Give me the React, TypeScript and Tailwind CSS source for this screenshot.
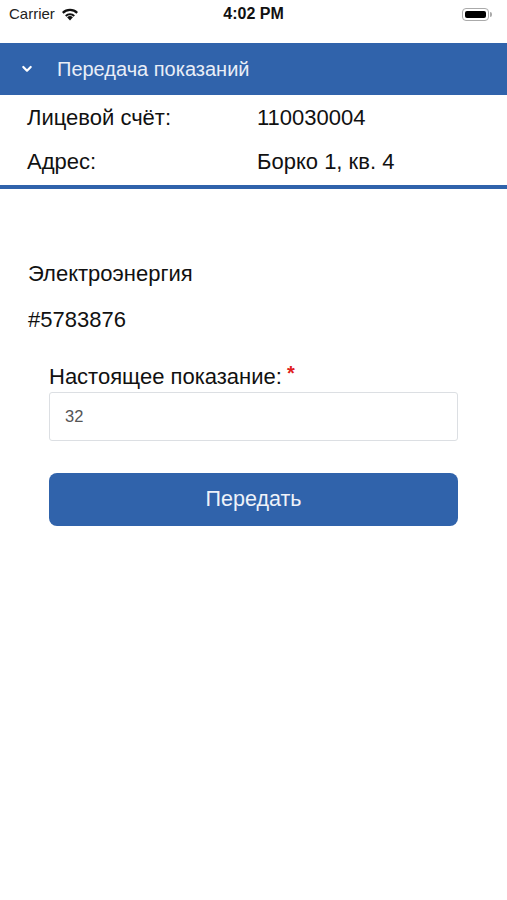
import React from "react";

export default function App() {
  return (
    <div className="w-[507px] h-[900px] bg-white relative overflow-hidden" style={{ fontFamily: "'Liberation Sans', Arial, sans-serif" }}>
      {/* Status bar */}
      <div className="h-[28px] flex items-center justify-between px-[9px] relative">
        <div className="flex items-center gap-[5px]">
          <span className="text-[15px] text-[#222]">Carrier</span>
          <svg width="20" height="14" viewBox="0 0 18 13">
            <path d="M9 12.5 L6.3 9.6 A4 4 0 0 1 11.7 9.6 Z" fill="#111" />
            <path d="M4.4 7.6 A6.6 6.6 0 0 1 13.6 7.6 L12.3 9 A4.8 4.8 0 0 0 5.7 9 Z" fill="#111" />
            <path d="M1.6 4.7 A10.5 10.5 0 0 1 16.4 4.7 L15 6.2 A8.5 8.5 0 0 0 3 6.2 Z" fill="#111" />
          </svg>
        </div>
        <span className="absolute left-1/2 -translate-x-1/2 text-[16px] font-bold text-[#111]">4:02 PM</span>
        <div className="flex items-center mr-[6px]">
          <div className="w-[27px] h-[13px] rounded-[4px] border border-[#aaa] p-[2px]">
            <div className="w-full h-full bg-black rounded-[2px]" />
          </div>
          <div className="w-[2px] h-[5px] bg-[#aaa] rounded-r-sm ml-[1px]" />
        </div>
      </div>

      <div className="h-[15px]" />

      {/* Header */}
      <div className="h-[52px] bg-[#3063ab] flex items-center">
        <svg className="ml-[21px]" width="12" height="12" viewBox="0 0 12 12">
          <path d="M2.3 4 L6 7.7 L9.7 4" stroke="#fff" strokeWidth="2.2" fill="none" strokeLinecap="round" strokeLinejoin="round" />
        </svg>
        <span className="ml-[24px] text-[20px] text-[#e9eef7]">Передача показаний</span>
      </div>

      {/* Info rows */}
      <div className="pl-[27px] text-[22px] text-[#111]">
        <div className="h-[44px] flex items-center">
          <span className="w-[230px]">Лицевой счёт:</span>
          <span>110030004</span>
        </div>
        <div className="h-[44px] flex items-center">
          <span className="w-[230px]">Адрес:</span>
          <span>Борко 1, кв. 4</span>
        </div>
      </div>
      <div className="h-[4px] bg-[#3063ab] mt-[2px]" />

      {/* Content */}
      <div className="pt-[72px] pl-[28px] text-[22px] text-[#111]">
        <div className="h-[24px] flex items-center">Электроэнергия</div>
        <div className="h-[24px] flex items-center mt-[22px]">#5783876</div>
      </div>

      <div className="px-[49px] mt-[34px] w-[507px]">
        <div className="flex items-start h-[24px] text-[22px] text-[#111]">
          <span className="leading-[24px]">Настоящее показание:</span>
          <span className="text-[#e02020] text-[20px] font-bold leading-[20px] ml-[5px] mt-[-2px]">*</span>
        </div>
        <div className="mt-[3px] h-[49px] border border-[#dcdfe3] rounded-[3px] flex items-center pl-[15px] text-[16.5px] text-[#555]">
          32
        </div>
        <button className="mt-[32px] w-full h-[53px] bg-[#3063ab] rounded-[8px] text-[21.5px] text-[#eef2f9] flex items-center justify-center">
          Передать
        </button>
      </div>
    </div>
  );
}
